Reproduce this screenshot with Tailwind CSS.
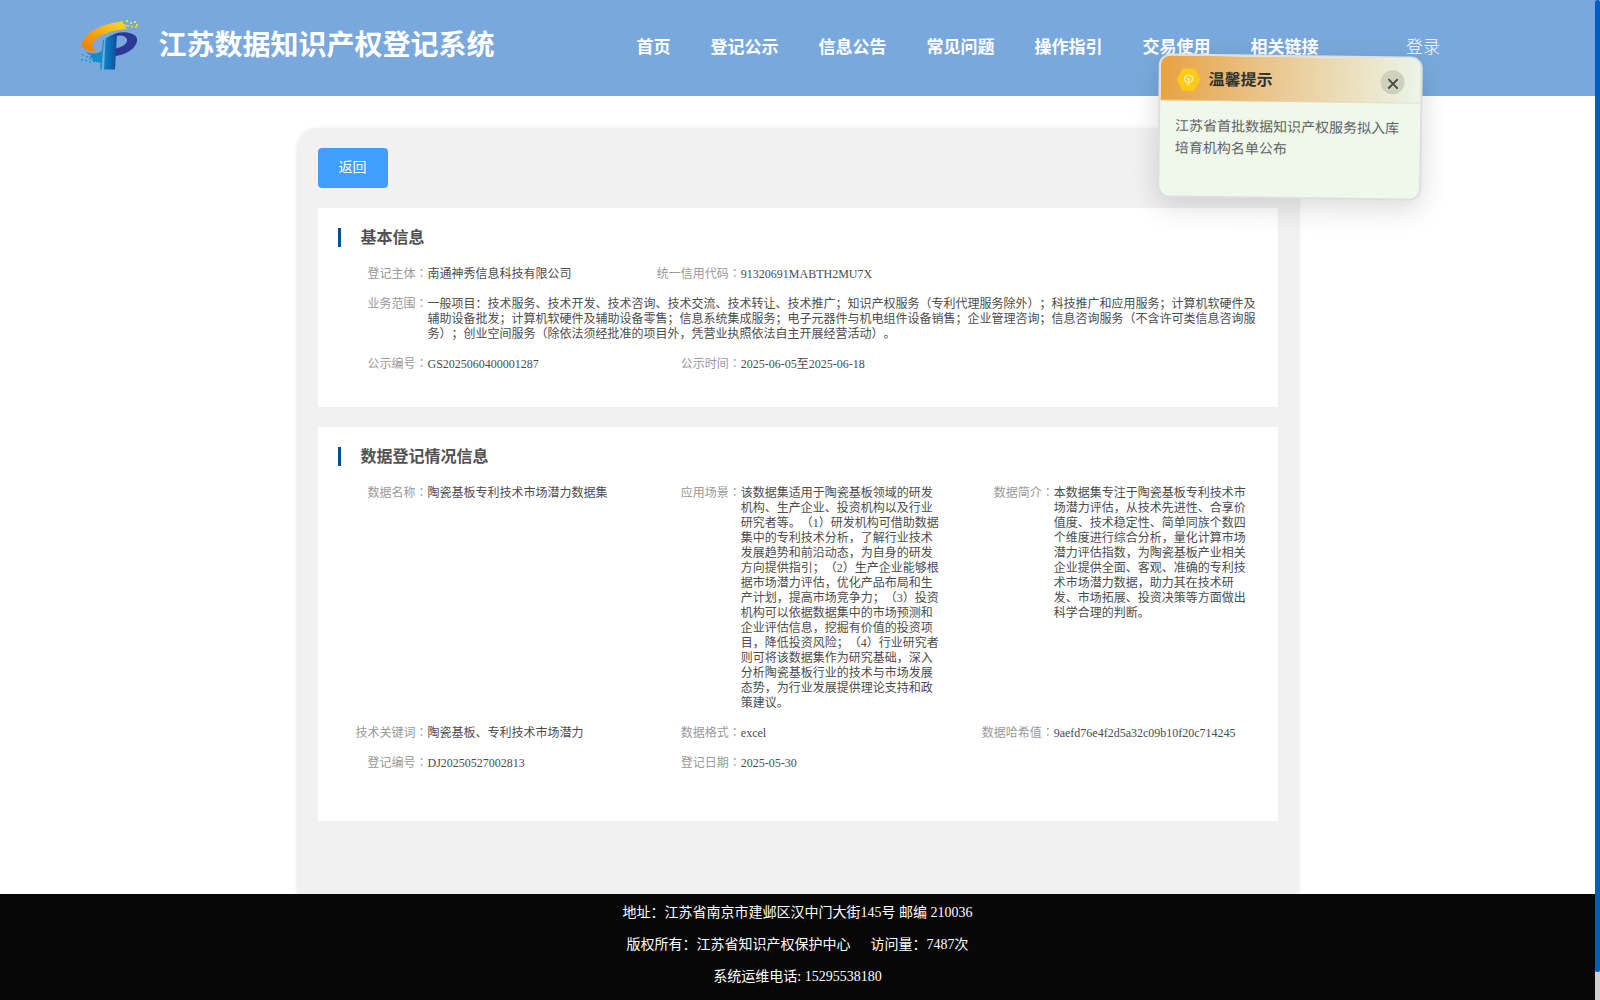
<!DOCTYPE html>
<html lang="zh-CN">
<head>
    <meta charset="UTF-8">
    <meta name="viewport" content="width=device-width, initial-scale=1.0">
    <title>江苏数据知识产权登记系统</title>
    <script src="https://cdn.jsdelivr.net/npm/@tailwindcss/browser@4"></script>
</head>
<body class="flex h-screen overflow-hidden bg-white font-['Liberation_Serif','Noto_Sans_CJK_SC',serif] [text-spacing-trim:space-all]">
    <div class="flex w-[1595px] shrink-0 flex-col">
        <!-- Header -->
        <header class="flex h-24 shrink-0 items-center bg-[#79a9dc] text-white">
            <svg class="ml-[79px] mt-[-6px] h-[54px] w-[62px] shrink-0" viewBox="0 0 62 54">
                <defs>
                    <linearGradient id="gold" x1="0" y1="1" x2="1" y2="0">
                        <stop offset="0" stop-color="#ee7700"/>
                        <stop offset="1" stop-color="#ffdc27"/>
                    </linearGradient>
                    <linearGradient id="blue" x1="0" y1="0" x2="1" y2="0">
                        <stop offset="0" stop-color="#0b86c9"/>
                        <stop offset="1" stop-color="#124b9b"/>
                    </linearGradient>
                </defs>
                <path fill="url(#gold)" d="M44 3.500C25 5 5 14 3 26c-.5 5 6 8 20 7.300-6 0-10-2-9.500-6C14 20 29 12 48 11l-2-2 2-2-4-1z"/>
                <path fill="#2c3796" d="M30 19c5-4 12-5.500 18-4.500 7 1 11 4 10 9-2 8-11 13-23 15l1-8c7-1 13-5 12-9-1-4-7-5-12-3z"/>
                <path fill="url(#blue)" d="M26.500 20.500Q31 17 38 16.500L36 51.500H25z"/>
                <path fill="#158bc8" d="M24 22l1 0-2.500 29.500H21l.8-7c-4 0-8-1-9.500-3l2-1-4-1.500 2-1.500-6-3.500c7 2 12 2 16.500-1z"/>
                <path fill="#ffdc27" d="M47 2h2v2h-2zM51 4h2v2h-2zM55 3h2v2h-2zM57 6h2v2h-2zM48 7h2v1.500h-2zM52 8h2v1.500h-2zM56 8h2v1.500h-2z"/>
                <path fill="#1b9cda" d="M3 36h2v1.500H3zM7 38h2v1.500H7zM2 41h2v1.500H2zM6 42h2v1.500H6zM10 40h2v1.500h-2zM10 43h2v1.500h-2zM14 43h2v1.500h-2z"/>
            </svg>
            <h1 class="ml-[17.5px] mt-[-5px] w-[336px] shrink-0 whitespace-nowrap text-[28px] leading-10 font-semibold">江苏数据知识产权登记系统</h1>
            <nav class="ml-[142px] flex gap-10 whitespace-nowrap text-[17px] font-semibold">
                <a>首页</a>
                <a>登记公示</a>
                <a>信息公告</a>
                <a>常见问题</a>
                <a>操作指引</a>
                <a>交易使用</a>
                <a>相关链接</a>
            </nav>
            <a class="ml-[87.5px] whitespace-nowrap text-[17px] font-light">登录</a>
        </header>

        <!-- Content -->
        <main class="mx-auto mt-8 w-[1000px] flex-1 rounded-t-[20px] bg-[#f1f1f1] px-5 pt-5 shadow-[0_2px_4px_rgba(0,0,0,0.12),0_0_6px_rgba(0,0,0,0.04)]">
            <button class="block h-10 w-[70px] rounded bg-[#409eff] text-sm text-white">返回</button>

            <section class="mt-5 h-[199px] bg-white pl-5 pt-5">
                <h2 class="flex h-[19px] items-center border-l-3 border-[#004f92] pl-5 text-base leading-none font-bold text-[#515151]">基本信息</h2>
                <dl class="mt-5 grid grid-cols-3 gap-y-[15px] whitespace-nowrap text-xs leading-[15px] text-[#4c4c4c]">
                    <div class="flex h-[15px]">
                        <dt class="w-[90px] shrink-0 text-right text-[#999]">登记主体<span class="font-['Noto_Sans_CJK_TC'] leading-none" lang="zh-TW">：</span></dt>
                        <dd>南通神秀信息科技有限公司</dd>
                    </div>
                    <div class="col-span-2 flex h-[15px]">
                        <dt class="w-[90px] shrink-0 text-right text-[#999]">统一信用代码<span class="font-['Noto_Sans_CJK_TC'] leading-none" lang="zh-TW">：</span></dt>
                        <dd>91320691MABTH2MU7X</dd>
                    </div>
                    <div class="col-span-3 flex h-[45px]">
                        <dt class="w-[90px] shrink-0 text-right text-[#999]">业务范围<span class="font-['Noto_Sans_CJK_TC'] leading-none" lang="zh-TW">：</span></dt>
                        <dd>
                            一般项目：技术服务、技术开发、技术咨询、技术交流、技术转让、技术推广；知识产权服务（专利代理服务除外）；科技推广和应用服务；计算机软硬件及<br>
                            辅助设备批发；计算机软硬件及辅助设备零售；信息系统集成服务；电子元器件与机电组件设备销售；企业管理咨询；信息咨询服务（不含许可类信息咨询服<br>
                            务）；创业空间服务（除依法须经批准的项目外，凭营业执照依法自主开展经营活动）。
                        </dd>
                    </div>
                    <div class="flex h-[15px]">
                        <dt class="w-[90px] shrink-0 text-right text-[#999]">公示编号<span class="font-['Noto_Sans_CJK_TC'] leading-none" lang="zh-TW">：</span></dt>
                        <dd>GS2025060400001287</dd>
                    </div>
                    <div class="flex h-[15px]">
                        <dt class="w-[90px] shrink-0 text-right text-[#999]">公示时间<span class="font-['Noto_Sans_CJK_TC'] leading-none" lang="zh-TW">：</span></dt>
                        <dd>2025-06-05至2025-06-18</dd>
                    </div>
                </dl>
            </section>

            <section class="mt-5 h-[394px] bg-white pl-5 pt-5">
                <h2 class="flex h-[19px] items-center border-l-3 border-[#004f92] pl-5 text-base leading-none font-bold text-[#515151]">数据登记情况信息</h2>
                <dl class="mt-5 grid grid-cols-3 gap-y-[15px] whitespace-nowrap text-xs leading-[15px] text-[#4c4c4c]">
                    <div class="flex h-[225px]">
                        <dt class="w-[90px] shrink-0 text-right text-[#999]">数据名称<span class="font-['Noto_Sans_CJK_TC'] leading-none" lang="zh-TW">：</span></dt>
                        <dd>陶瓷基板专利技术市场潜力数据集</dd>
                    </div>
                    <div class="flex h-[225px]">
                        <dt class="w-[90px] shrink-0 text-right text-[#999]">应用场景<span class="font-['Noto_Sans_CJK_TC'] leading-none" lang="zh-TW">：</span></dt>
                        <dd>
                            该数据集适用于陶瓷基板领域的研发<br>
                            机构、生产企业、投资机构以及行业<br>
                            研究者等。（1）研发机构可借助数据<br>
                            集中的专利技术分析，了解行业技术<br>
                            发展趋势和前沿动态，为自身的研发<br>
                            方向提供指引；（2）生产企业能够根<br>
                            据市场潜力评估，优化产品布局和生<br>
                            产计划，提高市场竞争力；（3）投资<br>
                            机构可以依据数据集中的市场预测和<br>
                            企业评估信息，挖掘有价值的投资项<br>
                            目，降低投资风险；（4）行业研究者<br>
                            则可将该数据集作为研究基础，深入<br>
                            分析陶瓷基板行业的技术与市场发展<br>
                            态势，为行业发展提供理论支持和政<br>
                            策建议。
                        </dd>
                    </div>
                    <div class="flex h-[225px]">
                        <dt class="w-[89.5px] shrink-0 text-right text-[#999]">数据简介<span class="font-['Noto_Sans_CJK_TC'] leading-none" lang="zh-TW">：</span></dt>
                        <dd>
                            本数据集专注于陶瓷基板专利技术市<br>
                            场潜力评估，从技术先进性、合享价<br>
                            值度、技术稳定性、简单同族个数四<br>
                            个维度进行综合分析，量化计算市场<br>
                            潜力评估指数，为陶瓷基板产业相关<br>
                            企业提供全面、客观、准确的专利技<br>
                            术市场潜力数据，助力其在技术研<br>
                            发、市场拓展、投资决策等方面做出<br>
                            科学合理的判断。
                        </dd>
                    </div>
                    <div class="flex h-[15px]">
                        <dt class="w-[90px] shrink-0 text-right text-[#999]">技术关键词<span class="font-['Noto_Sans_CJK_TC'] leading-none" lang="zh-TW">：</span></dt>
                        <dd>陶瓷基板、专利技术市场潜力</dd>
                    </div>
                    <div class="flex h-[15px]">
                        <dt class="w-[90px] shrink-0 text-right text-[#999]">数据格式<span class="font-['Noto_Sans_CJK_TC'] leading-none" lang="zh-TW">：</span></dt>
                        <dd>excel</dd>
                    </div>
                    <div class="flex h-[15px]">
                        <dt class="w-[89.5px] shrink-0 text-right text-[#999]">数据哈希值<span class="font-['Noto_Sans_CJK_TC'] leading-none" lang="zh-TW">：</span></dt>
                        <dd>9aefd76e4f2d5a32c09b10f20c714245</dd>
                    </div>
                    <div class="flex h-[15px]">
                        <dt class="w-[90px] shrink-0 text-right text-[#999]">登记编号<span class="font-['Noto_Sans_CJK_TC'] leading-none" lang="zh-TW">：</span></dt>
                        <dd>DJ20250527002813</dd>
                    </div>
                    <div class="flex h-[15px]">
                        <dt class="w-[90px] shrink-0 text-right text-[#999]">登记日期<span class="font-['Noto_Sans_CJK_TC'] leading-none" lang="zh-TW">：</span></dt>
                        <dd>2025-05-30</dd>
                    </div>
                </dl>
            </section>
        </main>

        <!-- Footer -->
        <footer class="relative h-[106px] shrink-0 bg-[#070707] pt-[3px] text-center text-sm leading-8 text-white">
            <p>地址：江苏省南京市建邺区汉中门大街145号 邮编 210036</p>
            <p>版权所有：江苏省知识产权保护中心<span class="ml-5">访问量：7487次</span></p>
            <p>系统运维电话: 15295538180</p>
        </footer>
    </div>

    <!-- Scrollbar -->
    <div class="w-[5px] shrink-0 bg-[#cfcfcf]">
        <div class="h-[972px] rounded-[2px] bg-[#005bc5]"></div>
    </div>

    <!-- Notice popup -->
    <aside class="absolute left-[1158px] top-[55px] h-[144px] w-[264px] rotate-[0.75deg] overflow-hidden rounded-xl border-2 border-[#dcdfe1] bg-[#f0f8ec] shadow-[0_8px_28px_rgba(0,0,0,0.15)]">
        <div class="flex h-[45px] items-center border-b border-[#e6d9b4]/60 bg-linear-to-r from-[#e6a23c] to-[#ebf5e9] px-4 pt-1">
            <svg class="h-6 w-6" viewBox="0 0 24 24">
                <path fill="#ffca16" d="M6 1h12l6 11-6 11H6L0 12z"/>
                <g fill="none" stroke="#fff1b5" stroke-width="1.2">
                    <path d="M10 14.5c-2-1.500-2.500-3-2-4.500 1-3 7-3 8 0 .5 1.500 0 3-2 4.500zM10.500 16.500h3M10.500 10.500l1.500 1.500 1.500-1.500M12 12v2.500"/>
                </g>
            </svg>
            <h3 class="ml-2 text-base font-bold text-[#303133]">温馨提示</h3>
            <button class="ml-auto flex h-6 w-6 items-center justify-center rounded-full bg-[#d0d1bc]">
                <svg class="mt-[3px] h-[11px] w-[11px]" viewBox="0 0 11 11" stroke="#444" stroke-width="1.800"><path d="M.8.8l9.400 9.400M10.200.8L.8 10.200"/></svg>
            </button>
        </div>
        <p class="px-[15px] pt-[15px] text-sm leading-[22px] whitespace-nowrap text-[#606266]">江苏省首批数据知识产权服务拟入库<br>培育机构名单公布</p>
    </aside>
</body>
</html>
